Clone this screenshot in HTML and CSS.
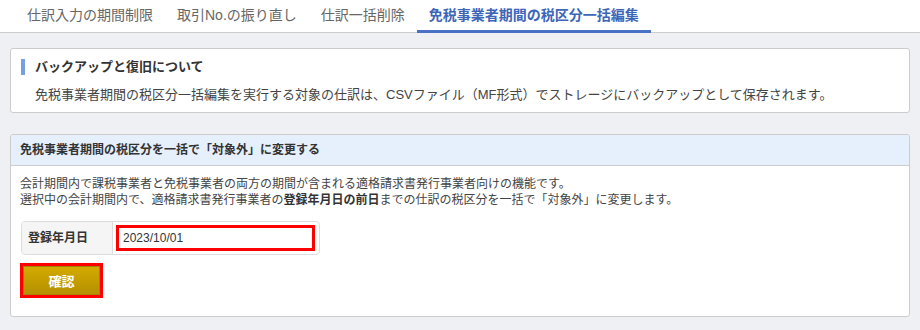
FILE: index.html
```html
<!DOCTYPE html>
<html lang="ja">
<head>
  <meta charset="UTF-8">
  <title>仕訳の一括編集</title>
  <link rel="stylesheet" href="styles.css">
</head>
<body>
  <ul class="tabs">
    <li><a href="#">仕訳入力の期間制限</a></li>
    <li><a href="#">取引No.の振り直し</a></li>
    <li><a href="#">仕訳一括削除</a></li>
    <li class="active"><a href="#">免税事業者期間の税区分一括編集</a></li>
  </ul>

  <div class="content">
    <div class="notice">
      <h3 class="notice-title">バックアップと復旧について</h3>
      <p class="notice-text">免税事業者期間の税区分一括編集を実行する対象の仕訳は、CSVファイル（MF形式）でストレージにバックアップとして保存されます。</p>
    </div>

    <div class="panel">
      <div class="panel-head">免税事業者期間の税区分を一括で「対象外」に変更する</div>
      <div class="panel-body">
        <p class="desc">会計期間内で課税事業者と免税事業者の両方の期間が含まれる適格請求書発行事業者向けの機能です。<br>選択中の会計期間内で、適格請求書発行事業者の<strong>登録年月日の前日</strong>までの仕訳の税区分を一括で「対象外」に変更します。</p>
        <div class="form-table">
          <div class="form-label">登録年月日</div>
          <div class="form-field"><input type="text" class="date-input" value="2023/10/01"></div>
        </div>
        <button class="confirm-btn">確認</button>
      </div>
    </div>
  </div>
</body>
</html>
```

FILE: styles.css
```css
body {
  margin: 0;
  background-color: #eff0f4;
  font-family: "Liberation Sans", "Noto Sans CJK JP", sans-serif;
  color: #333;
}

/* Tabs */
.tabs {
  list-style: none;
  margin: 0;
  padding: 0 0 0 15px;
  display: flex;
  background-color: white;
  border-bottom: 1px solid #ccc;
  height: 32px;
}

.tabs li {
  margin-bottom: -1px;
  border-bottom: 3px solid transparent;
}

.tabs li a {
  display: block;
  padding: 0 12px;
  line-height: 30px;
  font-size: 14px;
  color: #666;
  text-decoration: none;
}

.tabs li.active {
  border-bottom-color: #4a72c4;
}

.tabs li.active a {
  color: #3d66b8;
  font-weight: bold;
}

.content {
  padding: 15px 10px;
}

/* Backup notice */
.notice {
  background-color: white;
  border: 1px solid #ccc;
  border-radius: 3px;
  padding: 10px 10px 9px;
}

.notice-title {
  margin: 0;
  font-size: 13px;
  line-height: 16px;
  border-left: 4px solid #7a9fe0;
  padding-left: 10px;
  color: #333;
}

.notice-text {
  margin: 12px 0 0 14px;
  font-size: 13px;
  line-height: 16px;
  color: #444;
}

/* Panel */
.panel {
  margin-top: 21px;
  background-color: white;
  border: 1px solid #ccc;
  border-radius: 3px;
}

.panel-head {
  background-color: #e6f0fc;
  border-bottom: 1px solid #ccc;
  height: 30px;
  line-height: 30px;
  padding-left: 9px;
  font-size: 12px;
  font-weight: bold;
  border-radius: 3px 3px 0 0;
}

.panel-body {
  padding: 10px 9px 18px;
}

.desc {
  margin: 0;
  font-size: 12px;
  line-height: 16px;
  color: #444;
}

.desc strong {
  color: #333;
}

.form-table {
  display: flex;
  width: 297px;
  margin: 13px 0 0 1px;
  border: 1px solid #ddd;
  border-radius: 4px;
  overflow: hidden;
}

.form-label {
  width: 84px;
  padding-left: 6px;
  background-color: #f5f5f5;
  border-right: 1px solid #ddd;
  font-size: 12px;
  font-weight: bold;
  line-height: 32px;
}

.form-field {
  flex: 1;
  padding: 3px 4px 3px 3px;
}

.date-input {
  display: block;
  box-sizing: border-box;
  width: 100%;
  height: 26px;
  border: 3px solid #f00;
  padding: 0 4px;
  font-family: "Liberation Sans", sans-serif;
  font-size: 12px;
  color: #333;
  outline: none;
}

.confirm-btn {
  display: block;
  margin-top: 8px;
  width: 83px;
  height: 35px;
  border: 3px solid #f00;
  background: linear-gradient(#d4ab00, #b48f00);
  box-shadow: inset 0 0 0 1px #a88500;
  color: white;
  font-family: "Liberation Sans", "Noto Sans CJK JP", sans-serif;
  font-size: 13px;
  font-weight: bold;
  cursor: pointer;
}
```
